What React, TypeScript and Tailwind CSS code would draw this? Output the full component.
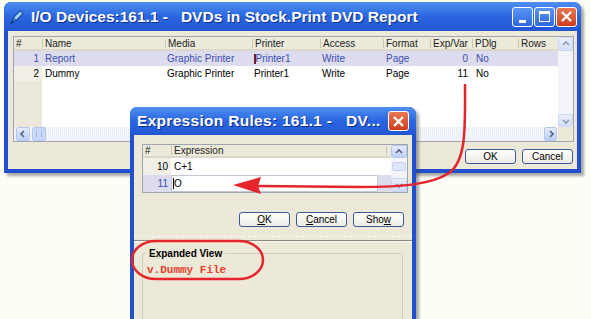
import React from 'react'

const sans = "font-['Liberation_Sans','Arial',sans-serif]"

const mainCols = [
  { label: '#', w: 28 },
  { label: 'Name', w: 123 },
  { label: 'Media', w: 87 },
  { label: 'Printer', w: 68 },
  { label: 'Access', w: 63 },
  { label: 'Format', w: 47 },
  { label: 'Exp/Var', w: 42 },
  { label: 'PDlg', w: 46 },
  { label: 'Rows', w: 40 },
]

const devices = [
  { n: 1, name: 'Report', media: 'Graphic Printer', printer: 'Printer1', access: 'Write', format: 'Page', exp: '0', pdlg: 'No', current: true },
  { n: 2, name: 'Dummy', media: 'Graphic Printer', printer: 'Printer1', access: 'Write', format: 'Page', exp: '11', pdlg: 'No', current: false },
]

function Chevron({ dir }: { dir: 'up' | 'down' | 'left' | 'right' }) {
  const d = {
    up: 'M2 6 L5 3 L8 6',
    down: 'M2 4 L5 7 L8 4',
    left: 'M6 2 L3 5 L6 8',
    right: 'M4 2 L7 5 L4 8',
  }[dir]
  return (
    <svg width="10" height="10" viewBox="0 0 10 10">
      <path d={d} fill="none" stroke="#4d6185" strokeWidth="1.6" />
    </svg>
  )
}

function ScrollBtn({ dir, className = '' }: { dir: 'up' | 'down' | 'left' | 'right'; className?: string }) {
  return (
    <div className={`flex items-center justify-center rounded-[2px] border border-[#b7c8ef] bg-gradient-to-b from-[#e4ecfd] to-[#bfd0f6] ${className}`}>
      <Chevron dir={dir} />
    </div>
  )
}

function XpButton({ children, className = '' }: { children: React.ReactNode; className?: string }) {
  return (
    <div className={`flex h-[15px] w-[51px] items-center justify-center rounded-[3px] border border-[#3a5a9a] bg-gradient-to-b from-[#ffffff] to-[#ecebe4] text-[10px] leading-none text-black ${className}`}>
      {children}
    </div>
  )
}

function TitleButton({ kind }: { kind: 'min' | 'max' | 'close' }) {
  const bg = kind === 'close' ? 'bg-gradient-to-b from-[#e8774f] to-[#cf3c1d]' : 'bg-gradient-to-b from-[#5b95f5] to-[#2f67e0]'
  return (
    <div className={`flex h-[20px] w-[21px] items-center justify-center rounded-[3px] border border-white ${bg}`}>
      {kind === 'min' && <div className="mt-[9px] h-[3px] w-[7px] bg-white" />}
      {kind === 'max' && <div className="h-[11px] w-[11px] border-[1.5px] border-t-[3px] border-white" />}
      {kind === 'close' && (
        <svg width="13" height="13" viewBox="0 0 13 13">
          <path d="M2 2 L11 11 M11 2 L2 11" stroke="white" strokeWidth="2.4" />
        </svg>
      )}
    </div>
  )
}

function QuillIcon() {
  return (
    <svg width="16" height="16" viewBox="0 0 16 16">
      <path d="M2.5 14 L4.5 8.5 L11 1.5 L14.5 4.5 L8 11 Z" fill="#3a7cd0" stroke="#17398a" strokeWidth="1" />
      <path d="M5.2 8.8 L11.1 2.7 L13 4.3 L7.3 10.3 Z" fill="#a4d6f7" />
      <path d="M1.5 15 L4 11.5" stroke="#17398a" strokeWidth="1.3" />
    </svg>
  )
}

function MainWindow() {
  return (
    <div className="absolute left-[4px] top-[2px] flex h-[171px] w-[577px] flex-col rounded-t-[7px] bg-[#2150cc] shadow-[3px_3px_3px_rgba(60,60,60,0.45)]">
      {/* title bar */}
      <div className="flex h-[29px] shrink-0 items-center rounded-t-[7px] bg-gradient-to-b from-[#4f8ff2] via-[#2a66e0] to-[#2257d2] pl-[5px] pr-[4px]">
        <QuillIcon />
        <div className="ml-[6px] whitespace-pre text-[15.5px] font-bold text-white font-['Liberation_Sans',sans-serif] [text-shadow:1px_1px_0_#0f2f8f]">
          {'I/O Devices:161.1 -   DVDs in Stock.Print DVD Report'}
        </div>
        <div className="ml-auto flex gap-[1px]">
          <TitleButton kind="min" />
          <TitleButton kind="max" />
          <TitleButton kind="close" />
        </div>
      </div>

      {/* body */}
      <div className="mx-[4px] mb-[4px] flex flex-1 flex-col bg-[#ece9d8] pl-[5px] pr-[3px] pt-[5px]">
        <div className={`flex h-[106px] w-[561px] flex-col border border-[#9fa6b2] bg-white ${sans}`}>
          <div className="flex h-[90px]">
            <div className="flex flex-1 flex-col">
              {/* header */}
              <div className="flex h-[14px] shrink-0 border-b-2 border-[#dcd7c6] bg-[#ebeadb] text-[10px] text-[#222]">
                {mainCols.map((c, i) => (
                  <div key={c.label} style={{ width: c.w }} className="flex items-center">
                    {i > 0 && <div className="mr-[2px] h-[9px] w-[1px] bg-[#c9c5b4]" />}
                    <span className={i === 0 ? 'pl-[2px]' : ''}>{c.label}</span>
                  </div>
                ))}
              </div>
              {/* rows */}
              {devices.map(d => (
                <div key={d.n} className={`flex h-[15px] items-center text-[10px] ${d.current ? 'bg-[#dcdcee] text-[#3d4fb0]' : 'text-black'}`}>
                  <div className={`flex h-full w-[28px] items-center justify-end pr-[3px] ${d.current ? '' : 'bg-[#f1efe6]'}`}>{d.n}</div>
                  <div className="w-[123px] pl-[3px]">{d.name}</div>
                  <div className="w-[87px] pl-[2px]">{d.media}</div>
                  <div className="flex w-[68px] items-center pl-[2px]">
                    {d.current && <span className="h-[10px] w-[1.5px] bg-[#6a2020]" />}
                    <span>{d.printer}</span>
                  </div>
                  <div className="w-[63px] pl-[2px]">{d.access}</div>
                  <div className="w-[47px] pl-[3px]">{d.format}</div>
                  <div className="w-[42px] pr-[4px] text-right">{d.exp}</div>
                  <div className="w-[46px] pl-[4px]">{d.pdlg}</div>
                  <div className="w-[40px]" />
                </div>
              ))}
              <div className="flex flex-1">
                <div className="w-[28px] bg-[#ece9dc]" />
                <div className="flex-1 bg-white" />
              </div>
            </div>
            {/* vertical scrollbar */}
            <div className="flex w-[15px] flex-col bg-[#f3f4f7]">
              <ScrollBtn dir="up" className="h-[14px] opacity-60" />
              <div className="flex-1 bg-[repeating-linear-gradient(0deg,#eef0f6_0px,#eef0f6_1px,#f8f8fb_1px,#f8f8fb_2px)]" />
              <ScrollBtn dir="down" className="h-[13px] opacity-60" />
            </div>
          </div>
          {/* horizontal scrollbar */}
          <div className="flex h-[14px] bg-[#f3f4f7]">
            <div className="flex flex-1 items-stretch pl-[2px] pr-[1px]">
              <ScrollBtn dir="left" className="w-[14px]" />
              <div className="ml-[2px] flex w-[14px] items-center justify-center rounded-[2px] border border-[#b7c8ef] bg-[#c9d8fa]">
                <div className="h-[6px] w-[6px] border-x border-[#9fb3e0]" />
              </div>
              <div className="flex-1 bg-[repeating-linear-gradient(90deg,#e8ecf6_0px,#e8ecf6_1px,#f7f8fb_1px,#f7f8fb_2px)]" />
              <ScrollBtn dir="right" className="w-[13px]" />
            </div>
            <div className="w-[15px] bg-[#ece9d8]" />
          </div>
        </div>
        <div className={`mt-[7px] flex justify-end gap-[6px] pr-[1px] ${sans}`}>
          <XpButton>OK</XpButton>
          <XpButton>Cancel</XpButton>
        </div>
      </div>
    </div>
  )
}

function ExpressionDialog() {
  return (
    <div className="absolute left-[130px] top-[107px] flex h-[240px] w-[286px] flex-col rounded-t-[7px] bg-[#2150cc] shadow-[3px_3px_3px_rgba(60,60,60,0.45)]">
      <div className="flex h-[28px] shrink-0 items-center rounded-t-[7px] bg-gradient-to-b from-[#4f8ff2] via-[#2a66e0] to-[#2257d2] pl-[7px] pr-[7px]">
        <div className="whitespace-pre text-[15.5px] font-bold tracking-[0.3px] text-white font-['Liberation_Sans',sans-serif] [text-shadow:1px_1px_0_#0f2f8f]">
          {'Expression Rules: 161.1 -   DV...'}
        </div>
        <div className="ml-auto">
          <TitleButton kind="close" />
        </div>
      </div>

      <div className={`mx-[4px] flex flex-1 flex-col bg-[#ece9d8] pt-[9px] ${sans}`}>
        {/* grid */}
        <div className="ml-[8px] flex h-[49px] w-[266px] border border-[#9fa6b2] bg-white">
          <div className="flex flex-1 flex-col">
            <div className="flex h-[13px] shrink-0 items-center border-b-2 border-[#dcd7c6] bg-[#ebeadb] text-[10px] text-[#222]">
              <div className="w-[28px] pl-[2px]">#</div>
              <div className="mr-[2px] h-[9px] w-[1px] bg-[#c9c5b4]" />
              <div className="flex-1">Expression</div>
              <div className="mr-[4px] h-[9px] w-[1px] bg-[#c9c5b4]" />
            </div>
            <div className="flex h-[17px] items-center text-[10px]">
              <div className="flex h-full w-[28px] items-center justify-end bg-[#f1efe6] pr-[3px]">10</div>
              <div className="pl-[3px]">C+1</div>
            </div>
            <div className="flex flex-1 items-stretch bg-[#dcdcee] text-[10px]">
              <div className="flex w-[28px] items-center justify-end pr-[3px] text-[#3d4fb0]">11</div>
              <div className="flex w-[207px] items-center border border-[#c3c8d6] bg-white pl-[1px]">
                <span className="h-[11px] w-[1px] bg-black" />
                <span>O</span>
              </div>
            </div>
          </div>
          <div className="flex w-[16px] flex-col bg-[#f3f4f7]">
            <ScrollBtn dir="up" className="h-[13px]" />
            <div className="mx-[1px] mt-[4px] h-[9px] rounded-[2px] border border-[#c3d1f2] bg-[#dde6fb]" />
            <div className="flex-1" />
            <ScrollBtn dir="down" className="h-[14px] opacity-70" />
          </div>
        </div>

        {/* buttons */}
        <div className="mt-[19px] flex justify-end gap-[6px] pr-[8px]">
          <XpButton><span className="underline">O</span>K</XpButton>
          <XpButton><span className="underline">C</span>ancel</XpButton>
          <XpButton>Sho<span className="underline">w</span></XpButton>
        </div>

        {/* separator */}
        <div className="mt-[9px] h-[1px] bg-[repeating-linear-gradient(90deg,#ffffff_0px,#ffffff_2px,#d8d5c8_2px,#d8d5c8_3px)]" />
        <div className="mt-[3px] h-[1px] bg-[#8d8b80]" />
        <div className="h-[1px] bg-[#f8f7f0]" />

        {/* expanded view group */}
        <div className="relative ml-[8px] mt-[11px] w-[261px] flex-1 rounded-t-[3px] border border-b-0 border-[#d3cbbd] pl-[4px] pt-[9px]">
          <div className="absolute -top-[7px] left-[3px] bg-[#ece9d8] px-[3px] text-[10px] font-bold leading-[13px] text-black">
            Expanded View
          </div>
          <div className="text-[11px] font-bold leading-[14px] text-[#e5432b] font-['Liberation_Mono','Courier_New',monospace]">
            v.Dummy File
          </div>
        </div>
      </div>
    </div>
  )
}

function Annotations() {
  return (
    <svg className="pointer-events-none absolute inset-0" width="591" height="319" viewBox="0 0 591 319">
      <path
        d="M465 84 C465 125 467 160 449 173 C432 184 405 187 360 187 L258 186"
        fill="none"
        stroke="#e5242b"
        strokeWidth="2.5"
      />
      <path d="M233 185 L261 177 L258 186 L261 194 Z" fill="#e5242b" />
      <rect x="132" y="241" width="131" height="38" rx="24" ry="19" fill="none" stroke="#e5242b" strokeWidth="2.5" />
    </svg>
  )
}

export default function App() {
  return (
    <div className="relative h-[319px] w-[591px] overflow-hidden bg-[#fdfdf6]">
      <MainWindow />
      <ExpressionDialog />
      <Annotations />
    </div>
  )
}
